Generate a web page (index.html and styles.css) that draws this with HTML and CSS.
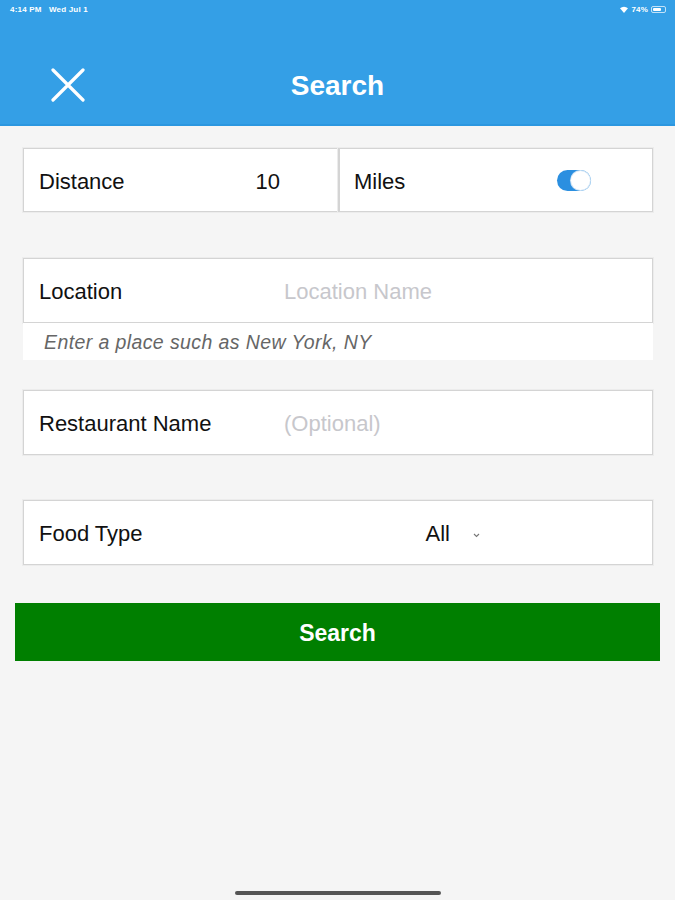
FILE: index.html
```html
<!DOCTYPE html>
<html>
<head>
<meta charset="utf-8">
<link rel="stylesheet" href="styles.css">
</head>
<body>
<div class="screen">
  <header class="header">
    <div class="status">
      <span class="status-left">4:14 PM&nbsp;&nbsp;&nbsp;Wed Jul 1</span>
      <span class="status-right">
        <svg class="wifi" width="8" height="7" viewBox="0 0 8 7"><path d="M0 2.2 A6 6 0 0 1 8 2.2 L4 7 Z" fill="#fff"/></svg>
        <span>74%</span>
        <span class="battery"><span class="battery-fill"></span></span>
      </span>
    </div>
    <div class="navbar">
      <svg class="close" width="34" height="34" viewBox="0 0 34 34"><path d="M2 2 L32 32 M32 2 L2 32" stroke="#fff" stroke-width="3.2" stroke-linecap="round"/></svg>
      <h1 class="title">Search</h1>
    </div>
  </header>

  <main class="content">
    <div class="row-split">
      <div class="field half">
        <span class="label">Distance</span>
        <span class="value distance-value">10</span>
      </div>
      <div class="field half miles">
        <span class="label">Miles</span>
        <span class="toggle"><span class="knob"></span></span>
      </div>
    </div>

    <div class="group location-group">
      <div class="field">
        <span class="label label-wide">Location</span>
        <span class="placeholder">Location Name</span>
      </div>
      <div class="hint">Enter a place such as New York, NY</div>
    </div>

    <div class="field restaurant">
      <span class="label label-wide">Restaurant Name</span>
      <span class="placeholder">(Optional)</span>
    </div>

    <div class="field foodtype">
      <span class="label">Food Type</span>
      <span class="value all">All</span>
      <svg class="chev" width="7" height="5" viewBox="0 0 7 5"><path d="M1 1 L3.5 3.5 L6 1" stroke="#777" stroke-width="1.1" fill="none"/></svg>
    </div>

    <button class="search-btn">Search</button>
  </main>

  <div class="home-indicator"></div>
</div>
</body>
</html>
```

FILE: styles.css
```css
* { box-sizing: border-box; }
html, body { margin: 0; padding: 0; }
body {
  background: #f5f5f5;
  font-family: "Liberation Sans", Arial, sans-serif;
  width: 675px;
  height: 900px;
  overflow: hidden;
}
.screen {
  position: relative;
  width: 675px;
  height: 900px;
}
.header {
  background: #349fe6;
  height: 126px;
  border-bottom: 2px solid #2b97e0;
}
.status {
  height: 18px;
  display: flex;
  justify-content: space-between;
  align-items: center;
  padding: 0 9px 0 10px;
  color: #fff;
  font-size: 8px;
  font-weight: bold;
  letter-spacing: 0.2px;
}
.status-right {
  display: flex;
  align-items: center;
  gap: 3px;
}
.battery {
  width: 15px;
  height: 7px;
  border: 1px solid rgba(255,255,255,0.7);
  border-radius: 2px;
  padding: 1px;
  display: flex;
}
.battery-fill {
  width: 74%;
  background: #fff;
  border-radius: 1px;
}
.navbar {
  position: relative;
  height: 106px;
  display: flex;
  align-items: center;
  justify-content: center;
}
.close {
  position: absolute;
  left: 51px;
  top: 50px;
}
.title {
  margin: 0;
  margin-top: 30px;
  color: #fff;
  font-size: 28px;
  font-weight: bold;
}
.content {
  padding: 22px 22px 0 23px;
  display: flex;
  flex-direction: column;
}
.row-split {
  display: flex;
  height: 64px;
}
.field {
  background: #fff;
  border: 1px solid #d4d4d4;
  box-shadow: 0 0 0 1px #ececec;
  height: 65px;
  display: flex;
  align-items: center;
  padding-left: 15px;
  padding-top: 3px;
  font-size: 22px;
  color: #111;
}
.half {
  width: 315px;
  height: 64px;
}
.miles {
  border-left: 2px solid #d4d4d4;
  padding-left: 14px;
}
.label { white-space: nowrap; }
.label-wide { width: 245px; }
.distance-value { margin-left: 131px; }
.toggle {
  margin-left: 152px;
  margin-top: -2px;
  width: 34px;
  height: 21px;
  border-radius: 11px;
  background: #2b8fe0;
  position: relative;
}
.knob {
  position: absolute;
  right: 1px;
  top: 1px;
  width: 19px;
  height: 19px;
  border-radius: 50%;
  background: #fff;
  box-shadow: 0 0 0 1px #cfe3f5;
}
.placeholder { color: #c7c7cc; }
.location-group { margin-top: 46px; }
.hint {
  background: #fff;
  height: 37px;
  padding-left: 21px;
  padding-top: 1px;
  display: flex;
  align-items: center;
  font-size: 19.5px;
  font-style: italic;
  color: #666;
  letter-spacing: 0.4px;
}
.restaurant { margin-top: 30px; }
.foodtype { margin-top: 45px; }
.all { margin-left: 283px; }
.chev { margin-left: 23px; margin-top: 2px; }
.search-btn {
  margin: 38px -7px 0 -8px;
  height: 58px;
  background: #007f00;
  border: none;
  color: #fff;
  font-family: "Liberation Sans", Arial, sans-serif;
  font-size: 23px;
  font-weight: bold;
  padding: 2px 0 0;
}
.home-indicator {
  position: absolute;
  left: 235px;
  top: 891px;
  width: 206px;
  height: 4px;
  border-radius: 2px;
  background: #555;
}
```
